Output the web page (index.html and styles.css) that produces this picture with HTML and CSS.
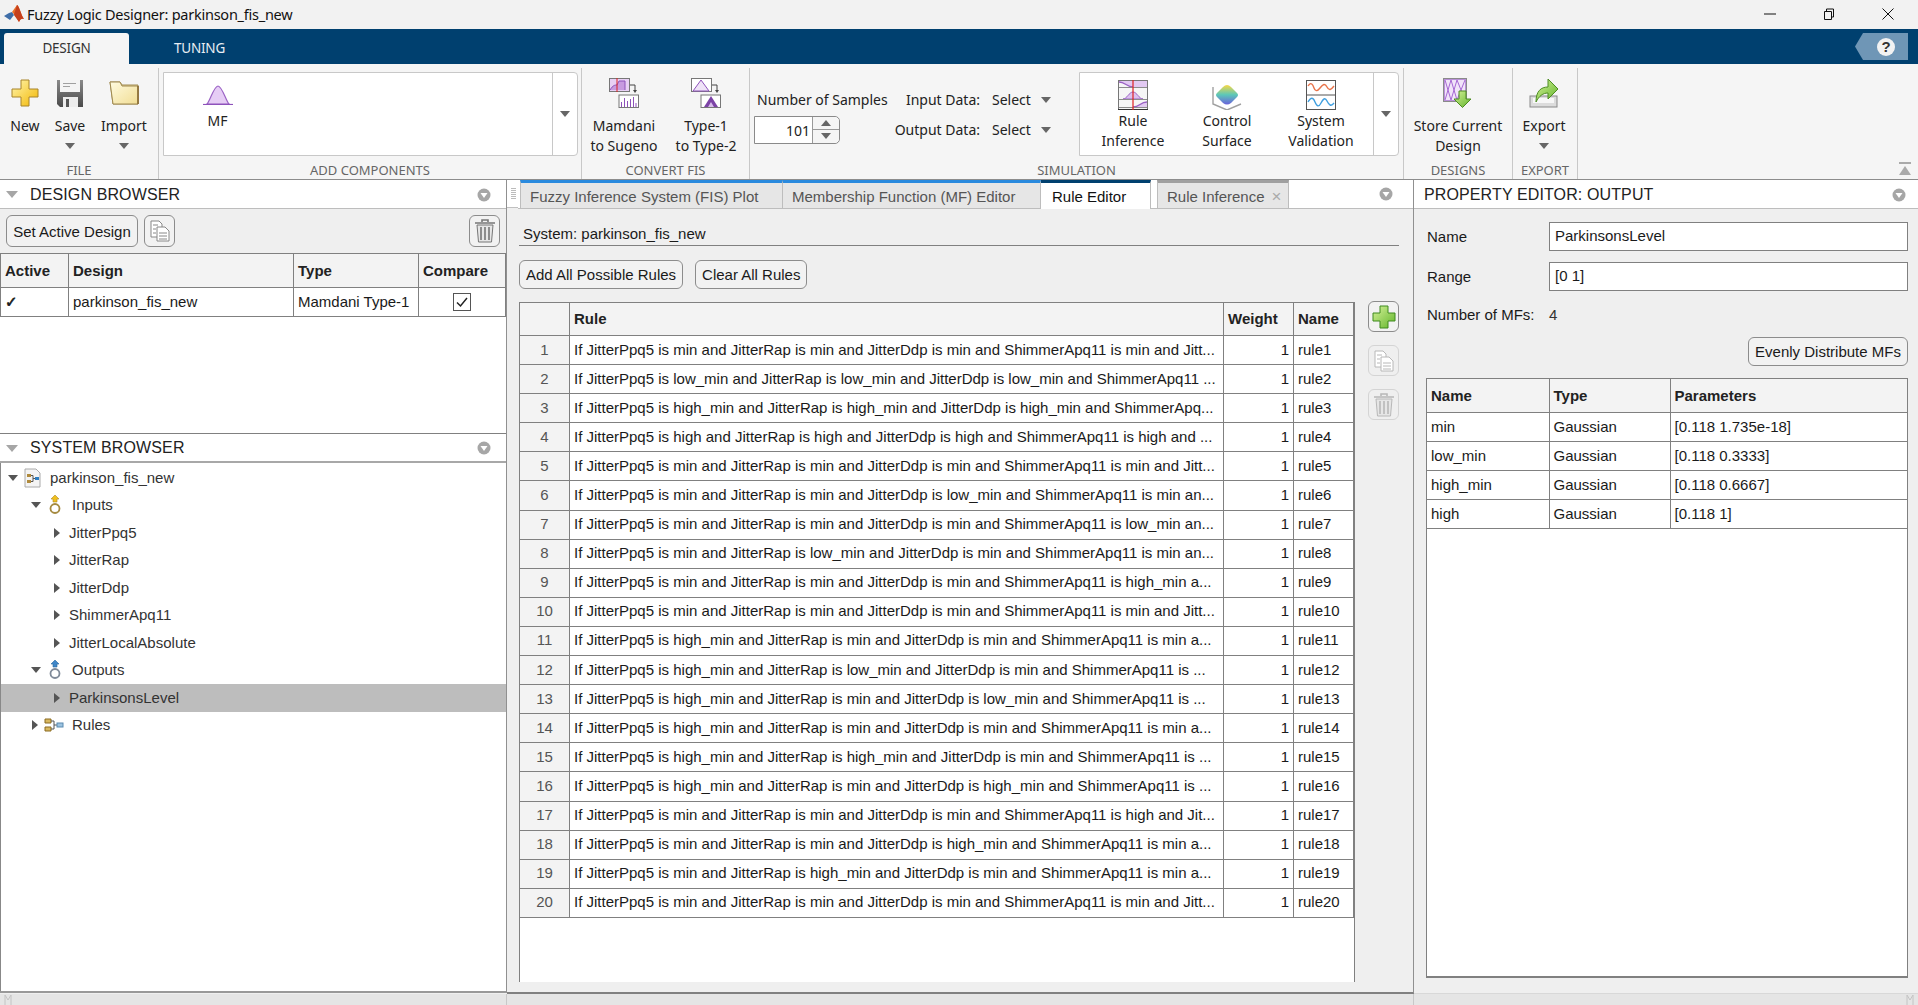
FILE: index.html
```html
<!DOCTYPE html>
<html lang="en">
<head>
<meta charset="utf-8">
<title>Fuzzy Logic Designer: parkinson_fis_new</title>
<link rel="stylesheet" href="styles.css">
</head>
<body>
<svg class="defs" width="0" height="0">
  <defs>
    <linearGradient id="gYellow" x1="0" y1="0" x2="1" y2="1"><stop offset="0" stop-color="#fff6b0"/><stop offset="1" stop-color="#f2b600"/></linearGradient>
    <linearGradient id="gGreen" x1="0" y1="0" x2="1" y2="1"><stop offset="0" stop-color="#d6f29a"/><stop offset="1" stop-color="#62b52a"/></linearGradient>
    <linearGradient id="gFolder" x1="0" y1="0" x2="1" y2="1"><stop offset="0" stop-color="#fffbe0"/><stop offset="1" stop-color="#f1dd94"/></linearGradient>
    <linearGradient id="gSurf" x1="0" y1="0" x2="0" y2="1"><stop offset="0" stop-color="#f7d844"/><stop offset=".5" stop-color="#5cc8b8"/><stop offset="1" stop-color="#6a62dc"/></linearGradient>
    <linearGradient id="gSave" x1="0" y1="0" x2="0" y2="1"><stop offset="0" stop-color="#8a8a8a"/><stop offset="1" stop-color="#4a4a4a"/></linearGradient>
    <symbol id="menu" viewBox="0 0 14 14"><circle cx="7" cy="7" r="6.5" fill="#a6a6a6"/><path d="M3.5 5h7L7 10z" fill="#fff"/></symbol>
    <symbol id="copy" viewBox="0 0 22 24"><path d="M2 2h8l3 3v13H2z" fill="#fff" stroke="currentColor"/><path d="M8 8h8l4 4v10H8z" fill="#fff" stroke="currentColor"/><path d="M10 14h8M10 17h8M10 20h8M4 6h5M4 10h3M4 14h3" stroke="currentColor" fill="none"/></symbol>
    <symbol id="trash" viewBox="0 0 22 24"><path d="M1 4h20M8 3V1h6v2" fill="none" stroke="currentColor" stroke-width="1.6"/><path d="M3 6h16l-1.5 17h-13z" fill="#e6e6e6" stroke="currentColor"/><path d="M7 8v13M11 8v13M15 8v13" stroke="currentColor" stroke-width="1.6"/></symbol>
  </defs>
</svg>
<div class="window">
  <header class="titlebar">
    <svg class="logo" viewBox="0 0 20 20"><path d="M0 12l5-3 3-1 2 3-4 5z" fill="#3f6ea8"/><path d="M8 8l5-7c2 0 4 10 7 14-2-1-4 0-5 3-2-4-4-7-7-10z" fill="#e8702a"/><path d="M13 1c-1 4-3 8-3 10l5 7c1-3 3-4 5-3-3-4-5-14-7-14z" fill="#c5401d"/></svg>
    <span class="title-text">Fuzzy Logic Designer: parkinson_fis_new</span>
    <div class="winbtns">
      <svg viewBox="0 0 12 12"><path d="M0 6h12" stroke="#111" fill="none"/></svg>
      <svg viewBox="0 0 12 12"><path d="M1.500 3.500h7v8h-7zM3.500 3.500V1h7v8H8.500" stroke="#111" fill="none"/></svg>
      <svg viewBox="0 0 12 12"><path d="M.5.5l11 11M11.500.5l-11 11" stroke="#111" fill="none"/></svg>
    </div>
  </header>
  <nav class="tabbar">
    <div class="rtab rtab-on">DESIGN</div>
    <div class="rtab rtab-2">TUNING</div>
    <div class="help"><span class="help-q">?</span></div>
  </nav>
  <section class="ribbon">
    <div class="rsec sec-file">
      <div class="rbody">
        <div class="rbtn b-new">
          <svg class="ico" viewBox="0 0 28 28"><path d="M10 1h8v9h9v8h-9v9h-8v-9H1v-8h9z" fill="url(#gYellow)" stroke="#a8842a" stroke-linejoin="round"/></svg>
          <span>New</span>
        </div>
        <div class="rbtn b-save">
          <svg class="ico" viewBox="0 0 28 28"><path d="M1 1h26v27H4l-3-3z" fill="url(#gSave)"/><rect x="4" y="1" width="20" height="12" fill="#f4f4f4"/><path d="M7 4.500h13M7 7.500h7" stroke="#a0a0a0"/><rect x="7" y="18" width="15" height="10" fill="#ececec"/><rect x="10" y="20" width="3" height="8" fill="#555"/></svg>
          <span>Save</span><i class="caret"></i>
        </div>
        <div class="rbtn b-import">
          <svg class="ico ico-folder" viewBox="0 0 30 28"><path d="M1 3h10l2 3h16v19H4z" fill="#f7e7ab" stroke="#a08a50"/><path d="M1 3l3 22h25V7H13l-2-4z" fill="url(#gFolder)" stroke="#a08a50"/><path d="M29 7v18" stroke="#8a6c34" stroke-width="1.600"/></svg>
          <span>Import</span><i class="caret"></i>
        </div>
      </div>
      <div class="rlabel">FILE</div>
    </div>
    <div class="rsec sec-add">
      <div class="rbody">
        <div class="gallery gal-add">
          <div class="gitem gitem-mf">
            <svg class="ico-mf" viewBox="0 0 30 20"><path d="M4 19C7 16 11 1 15 1s8 15 11 18z" fill="#e6cdf5" stroke="#9a62c4" stroke-width="1.200"/><path d="M0 19.500h30" stroke="#8e52bb" stroke-width="1.200"/></svg>
            <span>MF</span>
          </div>
          <div class="gmore"><i class="caret"></i></div>
        </div>
      </div>
      <div class="rlabel">ADD COMPONENTS</div>
    </div>
    <div class="rsec sec-conv">
      <div class="rbody">
        <div class="rbtn b-mam">
          <svg class="ico ico-wide" viewBox="0 0 30 30"><rect x=".5" y=".5" width="20" height="13" fill="#e8d0f5" stroke="#777"/><path d="M1 12c3-5 5-5 7-5l2-4h6v9" fill="#c79be0" stroke="#8e52bb"/><path d="M8 0v14" stroke="#d22"/><path d="M21 7h5v6" fill="none" stroke="#444"/><path d="M24 12h4l-2 3z" fill="#444"/><rect x="10" y="17" width="19.500" height="12.500" fill="#fff" stroke="#777"/><path d="M12.500 29v-5M15.500 29v-9M18.500 29v-6M21.500 29v-8M24.500 29v-10M27 29v-4" stroke="#8e52bb"/></svg>
          <span>Mamdani<br>to Sugeno</span>
        </div>
        <div class="rbtn b-typ">
          <svg class="ico ico-wide" viewBox="0 0 30 30"><rect x=".5" y=".5" width="20" height="13" fill="#fff" stroke="#777"/><path d="M2 13L10 2l8 11z" fill="#efe3f7" stroke="#8e52bb"/><path d="M21 7h5v6" fill="none" stroke="#444"/><path d="M24 12h4l-2 3z" fill="#444"/><rect x="10" y="17" width="19.500" height="12.500" fill="#fff" stroke="#777"/><path d="M13 29l7-11 7 11z" fill="#7c43a6"/><path d="M17 29l3-5 3 5z" fill="#d8bdea"/></svg>
          <span>Type-1<br>to Type-2</span>
        </div>
      </div>
      <div class="rlabel">CONVERT FIS</div>
    </div>
    <div class="rsec sec-sim">
      <div class="rbody sim-body">
        <div class="sim-ctrls">
          <span class="sim-lab">Number of Samples</span>
          <span class="sim-right">Input Data:</span>
          <span class="sim-sel">Select<i class="caret"></i></span>
          <div class="spinner"><span class="spin-val">101</span><div class="spin-arrows"><i class="tri-up"></i><i class="tri-down"></i></div></div>
          <span class="sim-right">Output Data:</span>
          <span class="sim-sel">Select<i class="caret"></i></span>
        </div>
        <div class="gallery gal-sim">
          <div class="gitem">
            <svg class="ico-g" viewBox="0 0 30 30"><rect width="30" height="30" fill="#f6f6f6"/><path d="M1 2c6 0 8 5 14 5h14V1H1z" fill="#e2c9f2"/><path d="M1 2c6 0 8 5 14 5" fill="none" stroke="#9a62c4" stroke-width="1.400"/><path d="M5 19c4 0 6-7 10-7s6 7 10 7z" fill="#dcc0f0" stroke="#9a62c4"/><path d="M15 27c7 0 7-5 14-5v5z" fill="#e2c9f2"/><path d="M15 27c7 0 7-5 14-5" fill="none" stroke="#9a62c4" stroke-width="1.400"/><path d="M1 7.500h28M1 19.500h28M1 27.500h28" stroke="#8c8c8c"/><rect x=".5" y=".5" width="29" height="29" fill="none" stroke="#777"/><path d="M0 29.500h30" stroke="#333"/><path d="M15 0v30" stroke="#e02020" stroke-width="1.200"/></svg>
            <span>Rule<br>Inference</span>
          </div>
          <div class="gitem">
            <svg class="ico-g" viewBox="0 0 30 30"><path d="M1 7v17l14 6 14-6" fill="none" stroke="#a0a0a0" stroke-width="1.400"/><path d="M15 5q2 0 4 2l6 6q2 2 0 4l-6 6q-4 3-8 0l-6-6q-2-2 0-4l6-6q2-2 4-2z" fill="url(#gSurf)"/></svg>
            <span>Control<br>Surface</span>
          </div>
          <div class="gitem">
            <svg class="ico-g" viewBox="0 0 30 30"><rect x=".5" y=".5" width="29" height="29" fill="#fff" stroke="#555"/><path d="M0 15h30" stroke="#555"/><path d="M2 6c3-5 5-1 6 2s3 4 6 0 5-5 7-1 4 3 7-1" fill="none" stroke="#e8734a" stroke-width="1.400"/><path d="M2 22c3-5 5-5 7 0s4 5 6 1 4-6 6-2 4 6 7 2" fill="none" stroke="#3f9fe0" stroke-width="1.400"/></svg>
            <span>System<br>Validation</span>
          </div>
          <div class="gmore"><i class="caret"></i></div>
        </div>
      </div>
      <div class="rlabel">SIMULATION</div>
    </div>
    <div class="rsec sec-des">
      <div class="rbody">
        <div class="rbtn b-store">
          <svg class="ico ico-wide" viewBox="0 0 30 30"><rect x=".5" y=".5" width="23" height="23" fill="#fff" stroke="#8a8a8a"/><rect x="1.500" y="1.500" width="21" height="21" fill="#f1e4f9" stroke="#b890d8"/><path d="M2 2l6 20M8 2L2 22M8 2l6 20M14 2L8 22M14 2l8 20M22 2l-8 20" stroke="#a668d4" fill="none"/><path d="M16 13h7v8h5l-8.500 8.500L11 21h5z" fill="url(#gGreen)" stroke="#4d8c22"/></svg>
          <span>Store Current<br>Design</span>
        </div>
      </div>
      <div class="rlabel">DESIGNS</div>
    </div>
    <div class="rsec sec-exp">
      <div class="rbody">
        <div class="rbtn b-exp">
          <svg class="ico ico-wide" viewBox="0 0 30 30"><rect x="1" y="18" width="27" height="11" fill="#dcdcdc" stroke="#8a8a8a"/><rect x="4" y="20" width="21" height="5" fill="#f7f7f7"/><path d="M7 24C7 13 12 9 19 9V1l10 10-10 10v-6c-5 0-9 3-12 9z" fill="url(#gGreen)" stroke="#4d8c22"/></svg>
          <span>Export</span><i class="caret"></i>
        </div>
      </div>
      <div class="rlabel">EXPORT</div>
    </div>
    <div class="rest">
      <svg class="collapse" viewBox="0 0 14 14"><path d="M1 1h12" stroke="#aaa" stroke-width="2"/><path d="M7 4l6 9H1z" fill="#aaa"/></svg>
    </div>
  </section>
  <main class="workspace">
    <aside class="left">
      <div class="phead"><i class="tri-coll"></i><h2>DESIGN BROWSER</h2><svg class="pmenu"><use href="#menu"/></svg></div>
      <div class="dtools">
        <button class="btn btn-set">Set Active Design</button>
        <button class="btn btn-ico"><svg class="ico-tool"><use href="#copy"/></svg></button>
        <button class="btn btn-ico btn-del"><svg class="ico-tool"><use href="#trash"/></svg></button>
      </div>
      <div class="dtable-wrap">
        <table class="tbl dtable">
          <colgroup><col class="c-act"><col class="c-des"><col class="c-typ"><col></colgroup>
          <thead><tr><th>Active</th><th>Design</th><th>Type</th><th>Compare</th></tr></thead>
          <tbody><tr><td class="chk">✓</td><td>parkinson_fis_new</td><td>Mamdani Type-1</td><td class="cen"><span class="checkbox"><svg viewBox="0 0 16 16"><path d="M3 8.500l3.500 3.500L13 4" fill="none" stroke="#222" stroke-width="1.500"/></svg></span></td></tr></tbody>
        </table>
      </div>
      <div class="phead phead2"><i class="tri-coll"></i><h2>SYSTEM BROWSER</h2><svg class="pmenu"><use href="#menu"/></svg></div>
      <div class="tree">
        <div class="node lv0"><i class="tw-open"></i><svg class="nico" viewBox="0 0 17 20"><path d="M1 1h11l4 4v14H1z" fill="#f4f4f4" stroke="#aaa"/><path d="M3 6h4v3H3zM3 12h4v3H3z" fill="#b08a3c"/><path d="M7 7.500h2v6H7M9 10.500h2" fill="none" stroke="#555"/><rect x="11" y="9" width="4" height="3" fill="#2f7fc1"/></svg><span>parkinson_fis_new</span></div>
        <div class="node lv1"><i class="tw-open"></i><svg class="nico" viewBox="0 0 14 20"><path d="M7 0l4 4H9v3H5V4H3z" fill="#f0c020" stroke="#b08a20" stroke-width=".6"/><circle cx="7" cy="13.500" r="4.500" fill="#fff" stroke="#a58a40" stroke-width="1.800"/></svg><span>Inputs</span></div>
        <div class="node lv2"><i class="tw-closed"></i><span>JitterPpq5</span></div>
        <div class="node lv2"><i class="tw-closed"></i><span>JitterRap</span></div>
        <div class="node lv2"><i class="tw-closed"></i><span>JitterDdp</span></div>
        <div class="node lv2"><i class="tw-closed"></i><span>ShimmerApq11</span></div>
        <div class="node lv2"><i class="tw-closed"></i><span>JitterLocalAbsolute</span></div>
        <div class="node lv1"><i class="tw-open"></i><svg class="nico" viewBox="0 0 14 20"><path d="M7 0l4 4H9v3H5V4H3z" fill="#3f86c8" stroke="#2a6aa0" stroke-width=".6"/><circle cx="7" cy="13.500" r="4.500" fill="#fff" stroke="#7f8a99" stroke-width="1.800"/></svg><span>Outputs</span></div>
        <div class="node lv2 node-sel"><i class="tw-closed"></i><span>ParkinsonsLevel</span></div>
        <div class="node lv1"><i class="tw-closed"></i><svg class="nico nico-r" viewBox="0 0 20 14"><path d="M1 1h6v4H1zM1 9h6v4H1z" fill="#d8b860" stroke="#8a6a20"/><path d="M7 3h3v8H7M10 7h3" fill="none" stroke="#555"/><rect x="13" y="5" width="6" height="4" fill="#9cc3e0" stroke="#5a8ab0"/></svg><span>Rules</span></div>
      </div>
    </aside>
    <div class="splitter"><div class="grip"></div></div>
    <div class="center">
      <div class="ctabs">
        <div class="ctab t-fis">Fuzzy Inference System (FIS) Plot</div>
        <div class="ctab t-mf">Membership Function (MF) Editor</div>
        <div class="ctab t-rule">Rule Editor</div>
        <div class="ctab t-inf">Rule Inference<span class="tab-x">×</span></div>
        <div class="ctabs-fill"><svg class="pmenu"><use href="#menu"/></svg></div>
      </div>
      <div class="cbody">
        <div class="sysline">System: parkinson_fis_new</div>
        <div class="rulebtns"><button class="btn">Add All Possible Rules</button><button class="btn">Clear All Rules</button></div>
        <div class="rulearea">
          <div class="rtable-wrap">
            <table class="tbl rtable">
              <colgroup><col class="c-n"><col class="c-r"><col class="c-w"><col></colgroup>
              <thead><tr><th></th><th>Rule</th><th>Weight</th><th>Name</th></tr></thead>
              <tbody>
                <tr><td class="num">1</td><td>If JitterPpq5 is min and JitterRap is min and JitterDdp is min and ShimmerApq11 is min and Jitt...</td><td class="wt">1</td><td>rule1</td></tr>
                <tr><td class="num">2</td><td>If JitterPpq5 is low_min and JitterRap is low_min and JitterDdp is low_min and ShimmerApq11 ...</td><td class="wt">1</td><td>rule2</td></tr>
                <tr><td class="num">3</td><td>If JitterPpq5 is high_min and JitterRap is high_min and JitterDdp is high_min and ShimmerApq...</td><td class="wt">1</td><td>rule3</td></tr>
                <tr><td class="num">4</td><td>If JitterPpq5 is high and JitterRap is high and JitterDdp is high and ShimmerApq11 is high and ...</td><td class="wt">1</td><td>rule4</td></tr>
                <tr><td class="num">5</td><td>If JitterPpq5 is min and JitterRap is min and JitterDdp is min and ShimmerApq11 is min and Jitt...</td><td class="wt">1</td><td>rule5</td></tr>
                <tr><td class="num">6</td><td>If JitterPpq5 is min and JitterRap is min and JitterDdp is low_min and ShimmerApq11 is min an...</td><td class="wt">1</td><td>rule6</td></tr>
                <tr><td class="num">7</td><td>If JitterPpq5 is min and JitterRap is min and JitterDdp is min and ShimmerApq11 is low_min an...</td><td class="wt">1</td><td>rule7</td></tr>
                <tr><td class="num">8</td><td>If JitterPpq5 is min and JitterRap is low_min and JitterDdp is min and ShimmerApq11 is min an...</td><td class="wt">1</td><td>rule8</td></tr>
                <tr><td class="num">9</td><td>If JitterPpq5 is min and JitterRap is min and JitterDdp is min and ShimmerApq11 is high_min a...</td><td class="wt">1</td><td>rule9</td></tr>
                <tr><td class="num">10</td><td>If JitterPpq5 is min and JitterRap is min and JitterDdp is min and ShimmerApq11 is min and Jitt...</td><td class="wt">1</td><td>rule10</td></tr>
                <tr><td class="num">11</td><td>If JitterPpq5 is high_min and JitterRap is min and JitterDdp is min and ShimmerApq11 is min a...</td><td class="wt">1</td><td>rule11</td></tr>
                <tr><td class="num">12</td><td>If JitterPpq5 is high_min and JitterRap is low_min and JitterDdp is min and ShimmerApq11 is ...</td><td class="wt">1</td><td>rule12</td></tr>
                <tr><td class="num">13</td><td>If JitterPpq5 is high_min and JitterRap is min and JitterDdp is low_min and ShimmerApq11 is ...</td><td class="wt">1</td><td>rule13</td></tr>
                <tr><td class="num">14</td><td>If JitterPpq5 is high_min and JitterRap is min and JitterDdp is min and ShimmerApq11 is min a...</td><td class="wt">1</td><td>rule14</td></tr>
                <tr><td class="num">15</td><td>If JitterPpq5 is high_min and JitterRap is high_min and JitterDdp is min and ShimmerApq11 is ...</td><td class="wt">1</td><td>rule15</td></tr>
                <tr><td class="num">16</td><td>If JitterPpq5 is high_min and JitterRap is min and JitterDdp is high_min and ShimmerApq11 is ...</td><td class="wt">1</td><td>rule16</td></tr>
                <tr><td class="num">17</td><td>If JitterPpq5 is min and JitterRap is min and JitterDdp is min and ShimmerApq11 is high and Jit...</td><td class="wt">1</td><td>rule17</td></tr>
                <tr><td class="num">18</td><td>If JitterPpq5 is min and JitterRap is min and JitterDdp is high_min and ShimmerApq11 is min a...</td><td class="wt">1</td><td>rule18</td></tr>
                <tr><td class="num">19</td><td>If JitterPpq5 is min and JitterRap is high_min and JitterDdp is min and ShimmerApq11 is min a...</td><td class="wt">1</td><td>rule19</td></tr>
                <tr><td class="num">20</td><td>If JitterPpq5 is min and JitterRap is min and JitterDdp is min and ShimmerApq11 is min and Jitt...</td><td class="wt">1</td><td>rule20</td></tr>
              </tbody>
            </table>
          </div>
          <div class="rulectl">
            <button class="btn btn-sq"><svg class="ico-add" viewBox="0 0 24 24"><path d="M8 1h8v7h7v8h-7v7H8v-7H1V8h7z" fill="url(#gGreen)" stroke="#3f8a1e"/></svg></button>
            <button class="btn btn-sq btn-dis"><svg class="ico-tool"><use href="#copy"/></svg></button>
            <button class="btn btn-sq btn-dis"><svg class="ico-tool"><use href="#trash"/></svg></button>
          </div>
        </div>
      </div>
    </div>
    <aside class="right">
      <div class="phead phead-r"><h2>PROPERTY EDITOR: OUTPUT</h2><svg class="pmenu"><use href="#menu"/></svg></div>
      <div class="props">
        <div class="prow p-name"><label>Name</label><div class="input">ParkinsonsLevel</div></div>
        <div class="prow p-range"><label>Range</label><div class="input">[0 1]</div></div>
        <div class="prow p-num"><label>Number of MFs:</label><span>4</span></div>
        <div class="p-btn"><button class="btn">Evenly Distribute MFs</button></div>
        <div class="mf-wrap">
          <table class="tbl mftable">
            <colgroup><col class="c-mn"><col class="c-mt"><col></colgroup>
            <thead><tr><th>Name</th><th>Type</th><th>Parameters</th></tr></thead>
            <tbody>
              <tr><td>min</td><td>Gaussian</td><td>[0.118 1.735e-18]</td></tr>
              <tr><td>low_min</td><td>Gaussian</td><td>[0.118 0.3333]</td></tr>
              <tr><td>high_min</td><td>Gaussian</td><td>[0.118 0.6667]</td></tr>
              <tr><td>high</td><td>Gaussian</td><td>[0.118 1]</td></tr>
            </tbody>
          </table>
        </div>
      </div>
    </aside>
  </main>
  <footer class="statusbar">
    <div class="st-left"><svg class="st-grip" viewBox="0 0 8 11"><path d="M1 11V1l3 5 3-5v10" fill="none" stroke="#c4c4c4"/></svg></div>
    <div class="st-center"></div>
    <div class="st-right"><svg class="st-grip" viewBox="0 0 8 11"><path d="M1 11V1l3 5 3-5v10" fill="none" stroke="#c4c4c4"/></svg></div>
  </footer>
</div>
</body>
</html>
```
FILE: styles.css
```css
* { box-sizing: border-box; }
html, body { margin: 0; padding: 0; height: 100%; overflow: hidden; }
body { font: 15px/1.2 "Liberation Sans", Arial, sans-serif; color: #1a1a1a; background: #f0f0f0; }
.defs { display: block; height: 0; }
.window { width: 1918px; height: 1005px; display: flex; flex-direction: column; overflow: hidden; }

/* Title bar */
.titlebar { height: 29px; flex: none; background: #f2f2f2; display: flex; align-items: center; padding: 0 0 2px 4px; }
.logo { width: 20px; height: 20px; margin-right: 3px; }
.title-text { font: 14.5px "Noto Sans", sans-serif; letter-spacing: -.25px; color: #111; }
.winbtns { margin-left: auto; display: flex; gap: 47px; padding-right: 24px; }
.winbtns svg { width: 12px; height: 12px; }

/* Ribbon tabs */
.tabbar { height: 35px; flex: none; background: #00406f; display: flex; align-items: flex-end; padding-left: 4px; position: relative; }
.rtab { width: 125px; height: 31px; text-align: center; font: 13.5px/31px "Noto Sans", sans-serif; color: #e8eef4; letter-spacing: -.2px; }
.rtab-2 { margin-left: 8px; }
.rtab-on { background: #f5f5f5; color: #333; border-radius: 3px 3px 0 0; }
.help { position: absolute; left: 1855px; top: 4px; width: 53px; height: 27px; background: #6f96b6; clip-path: polygon(8px 0, 100% 0, 100% 100%, 8px 100%, 0 50%); display: flex; align-items: center; justify-content: center; padding-left: 9px; }
.help-q { width: 18px; height: 18px; border-radius: 50%; background: #f2f2f2; color: #333; font: bold 15px/18px "Liberation Sans", sans-serif; text-align: center; }

/* Ribbon */
.ribbon { height: 116px; flex: none; background: #f5f5f5; display: flex; border-bottom: 1px solid #8c8c8c; font: 14px/20px "Noto Sans", sans-serif; color: #222; }
.rsec { display: flex; flex-direction: column; border-right: 1px solid #c8c8c8; margin: 4px 0 0; }
.rbody { flex: 1; display: flex; margin-top: -4px; min-height: 0; }
.rlabel { height: 18px; line-height: 18px; text-align: center; font-size: 13px; color: #666; flex: none; }
.sec-file { width: 159px; }
.sec-add { width: 423px; }
.sec-conv { width: 168px; }
.sec-sim { width: 654px; }
.sec-des { width: 109px; }
.sec-exp { width: 65px; }
.rest { flex: 1; position: relative; }
.collapse { position: absolute; right: 6px; bottom: 3px; width: 14px; height: 14px; }

.rbtn { display: flex; flex-direction: column; align-items: center; padding-top: 15px; text-align: center; white-space: nowrap; }
.rbtn .ico { width: 28px; height: 28px; margin-bottom: 9px; }
.rbtn .ico-folder { width: 30px; }
.rbtn .ico-wide { width: 30px; height: 30px; margin-top: -1px; margin-bottom: 8px; }
.b-new { width: 50px; }
.b-save { width: 40px; }
.b-import { width: 68px; }
.rbtn .caret { margin-top: 7px; }
.b-mam { width: 84px; }
.b-typ { width: 80px; }
.b-store { width: 108px; }
.b-exp { width: 62px; }
.caret { display: inline-block; width: 0; height: 0; border: 5px solid transparent; border-top: 6px solid #666; border-bottom: 0; }

.gallery { height: 84px; margin-top: 8px; border: 1px solid #c8c8c8; border-radius: 0 4px 4px 0; background: #fff; display: flex; }
.gal-add { width: 415px; margin-left: 4px; }
.gal-sim { width: 320px; padding-left: 6px; }
.gitem { width: 94px; display: flex; flex-direction: column; align-items: center; padding-top: 7px; text-align: center; line-height: 20px; white-space: nowrap; }
.gitem-mf { width: 107px; padding-top: 12px; }
.ico-mf { width: 30px; height: 20px; margin-bottom: 6px; }
.ico-g { width: 30px; height: 30px; margin-bottom: 1px; }
.gmore { margin-left: auto; width: 25px; border-left: 1px solid #c8c8c8; display: flex; align-items: center; justify-content: center; }

.sim-body { padding-left: 4px; }
.sim-ctrls { width: 325px; padding-top: 22px; display: grid; grid-template-columns: 136px 90px auto; grid-template-rows: 28px 31px; align-items: center; }
.sim-lab { padding-left: 3px; white-space: nowrap; }
.sim-right { text-align: right; white-space: nowrap; }
.sim-sel { padding-left: 12px; display: flex; align-items: center; gap: 10px; }
.spinner { width: 86px; height: 28px; border: 1px solid #8a8a8a; border-radius: 0 5px 5px 0; background: #fff; display: flex; }
.spin-val { flex: 1; text-align: right; padding-right: 2px; line-height: 27px; font-family: "Noto Sans", sans-serif; }
.spin-arrows { width: 27px; border-left: 1px solid #999; display: flex; flex-direction: column; background: #f5f5f5; border-radius: 0 5px 5px 0; }
.tri-up, .tri-down { flex: 1; display: flex; justify-content: center; align-items: center; }
.tri-up { border-bottom: 1px solid #999; }
.tri-up::before { content: ""; border: 5px solid transparent; border-bottom: 6px solid #666; border-top: 0; }
.tri-down::before { content: ""; border: 5px solid transparent; border-top: 6px solid #666; border-bottom: 0; }

/* Workspace */
.workspace { flex: 1; min-height: 0; display: flex; background: #efefef; }
.left { width: 507px; flex: none; display: flex; flex-direction: column; border-right: 1px solid #909090; border-bottom: 2px solid #999; background: #fff; margin-bottom: 1px; }
.splitter { width: 11px; flex: none; background: #efefef; border-bottom: 2px solid #808080; }
.grip { height: 28px; background: #fff; border-bottom: 1px solid #c0c0c0; position: relative; }
.grip::after { content: ""; position: absolute; left: 4px; top: 8px; width: 5px; height: 11px; background: repeating-linear-gradient(#bbb 0 1px, #fff 1px 2px); }
.phead { height: 29px; flex: none; background: #fff; border-bottom: 1px solid #bdbdbd; display: flex; align-items: center; padding: 1px 15px 0 6px; position: relative; }
.phead h2 { margin: 0; font: 16px "Liberation Sans", sans-serif; color: #222; letter-spacing: .12px; }
.tri-coll { width: 0; height: 0; border: 6px solid transparent; border-top: 7px solid #a6a6a6; border-bottom: 0; margin-right: 12px; }
.pmenu { width: 14px; height: 14px; margin-left: auto; }
.dtools { height: 44px; flex: none; background: #efefef; display: flex; align-items: flex-start; padding: 6px 6px 0 6px; gap: 6px; }
.btn { font: 15px "Liberation Sans", sans-serif; color: #1a1a1a; background: #f2f2f2; border: 1px solid #8c8c8c; border-radius: 6px; height: 32px; padding: 0 6px; }
.btn-set { width: 132px; padding: 0; }
.btn-ico { width: 31px; padding: 0; display: flex; align-items: center; justify-content: center; color: #888; }
.btn-del { margin-left: auto; color: #777; }
.ico-tool { width: 22px; height: 24px; }

.tbl { border-collapse: collapse; table-layout: fixed; width: 100%; background: #fff; }
.tbl th, .tbl td { border: 1px solid #808080; padding: 0 4px; text-align: left; overflow: hidden; white-space: nowrap; font-size: 15px; }
.tbl td { padding-bottom: 1px; }
.tbl th { background: #f3f3f3; font-weight: bold; color: #222; }
.dtable-wrap { height: 181px; flex: none; background: #fff; border-bottom: 1px solid #808080; }
.dtable thead tr { height: 34px; }
.dtable tbody tr { height: 29px; }
.c-act { width: 68px; }
.c-des { width: 225px; }
.c-typ { width: 125px; }
.chk { font: bold 18px "DejaVu Sans", sans-serif; -webkit-text-stroke: .6px #111; }
.cen { text-align: center !important; }
.checkbox { display: inline-block; width: 18px; height: 18px; border: 1px solid #555; background: #fff; vertical-align: middle; }
.checkbox svg { display: block; width: 16px; height: 16px; }
.phead2 { border-bottom: 2px solid #a8a8a8; }

.tree { flex: 1; background: #fff; padding-top: 1px; border-left: 1px solid #888; }
.node { height: 27.5px; display: flex; align-items: center; font-size: 15px; color: #333; }
.lv0 { padding-left: 7px; }
.lv1 { padding-left: 30px; }
.lv2 { padding-left: 53px; }
.node-sel { background: #bdbdbd; }
.tw-open { width: 0; height: 0; border: 5px solid transparent; border-top: 6px solid #555; border-bottom: 0; flex: none; margin-right: 7px; }
.lv0 .tw-open { margin-right: 6px; }
.tw-closed { width: 0; height: 0; border: 5px solid transparent; border-left: 6px solid #555; border-right: 0; flex: none; margin-right: 9px; }
.lv1 .tw-closed { margin-left: 1px; margin-right: 6px; }
.nico { width: 17px; height: 20px; margin-right: 9px; flex: none; }
.lv1 .nico { width: 14px; height: 20px; margin-right: 10px; }
.lv1 .nico-r { width: 20px; height: 14px; margin-right: 8px; }

/* Center */
.center { width: 896px; flex: none; display: flex; flex-direction: column; border-right: 1px solid #909090; border-bottom: 2px solid #808080; }
.ctabs { height: 29px; flex: none; display: flex; background: #fff; border-bottom: 1px solid #bdbdbd; padding-left: 2px; }
.ctab { height: 28px; border-top: 3px solid #2a8ade; background: #e6e6e6; color: #555; padding-left: 9px; line-height: 27px; font-size: 15px; border-right: 1px solid #bdbdbd; white-space: nowrap; }
.t-fis { width: 263px; border-left: 1px solid #bdbdbd; }
.t-mf { width: 258px; }
.t-rule { width: 110px; background: #fff; color: #111; border-top-color: #00406f; height: 29px; margin-bottom: -1px; padding-left: 11px; }
.t-inf { width: 132px; margin-left: 6px; border-top-color: #a0a0a0; border-left: 1px solid #bdbdbd; display: flex; }
.tab-x { color: #aaa; margin-left: 7px; font-size: 17px; }
.ctabs-fill { flex: 1; display: flex; align-items: center; padding-right: 20px; }
.cbody { flex: 1; min-height: 0; background: #efefef; padding: 0 0 10px 1px; display: flex; flex-direction: column; }
.sysline { margin-top: 15px; width: 880px; height: 22px; padding-left: 4px; border-bottom: 1px solid #808080; line-height: 20px; flex: none; }
.rulebtns { display: flex; gap: 12px; margin-top: 14px; flex: none; }
.rulebtns .btn { height: 29px; }
.rulearea { flex: 1; min-height: 0; margin-top: 13px; display: flex; }
.rtable-wrap { width: 836px; background: #fff; border-right: 1px solid #808080; border-left: 1px solid #808080; }
.rtable { width: 835px; margin-left: -1px; }
.rtable thead tr { height: 33px; }
.rtable tbody tr { height: 29.1px; }
.c-n { width: 50px; }
.c-r { width: 654px; }
.c-w { width: 70px; }
.num { background: #f3f3f3; text-align: center !important; color: #555; }
.wt { text-align: right !important; }
.rulectl { margin: -1px 0 0 13px; display: flex; flex-direction: column; gap: 13px; }
.btn-sq { width: 31px; height: 31px; padding: 0; display: flex; align-items: center; justify-content: center; }
.ico-add { width: 24px; height: 24px; }
.btn-dis { border-color: #d4d4d4; color: #b8b8b8; background: #efefef; }

/* Right */
.right { flex: 1; display: flex; flex-direction: column; min-width: 0; border-bottom: 1px solid #d8d8d8; }
.phead-r { padding-left: 10px; padding-right: 12px; }
.props { flex: 1; min-height: 0; background: #efefef; padding: 13px 10px 15px 12px; display: flex; flex-direction: column; }
.prow { display: flex; align-items: center; flex: none; }
.prow label { width: 123px; flex: none; padding-left: 1px; }
.input { flex: 1; height: 29px; background: #fff; border: 1px solid #808080; padding: 0 5px; line-height: 26px; }
.p-range { margin-top: 11px; }
.p-num { margin-top: 12px; height: 23px; }
.p-num span { color: #333; }
.p-btn { display: flex; justify-content: flex-end; margin-top: 11px; flex: none; }
.p-btn .btn { height: 29px; width: 160px; padding: 0; }
.mf-wrap { flex: 1; margin-top: 12px; background: #fff; border: 1px solid #808080; border-bottom-width: 2px; }
.mftable { margin-top: -1px; }
.mftable th:first-child, .mftable td:first-child { border-left: 0; }
.mftable th:last-child, .mftable td:last-child { border-right: 0; }
.mftable thead tr { height: 34px; }
.mftable tbody tr { height: 29px; }
.c-mn { width: 122px; }
.c-mt { width: 121px; }

/* Status bar */
.statusbar { height: 11px; flex: none; background: #e5e5e5; display: flex; overflow: hidden; }
.st-left { width: 507px; border-right: 1px solid #c8c8c8; padding-left: 4px; }
.st-center { width: 907px; border-right: 1px solid #c8c8c8; }
.st-right { flex: 1; display: flex; justify-content: flex-end; padding-right: 4px; }
.st-grip { width: 8px; height: 11px; display: block; }
```
